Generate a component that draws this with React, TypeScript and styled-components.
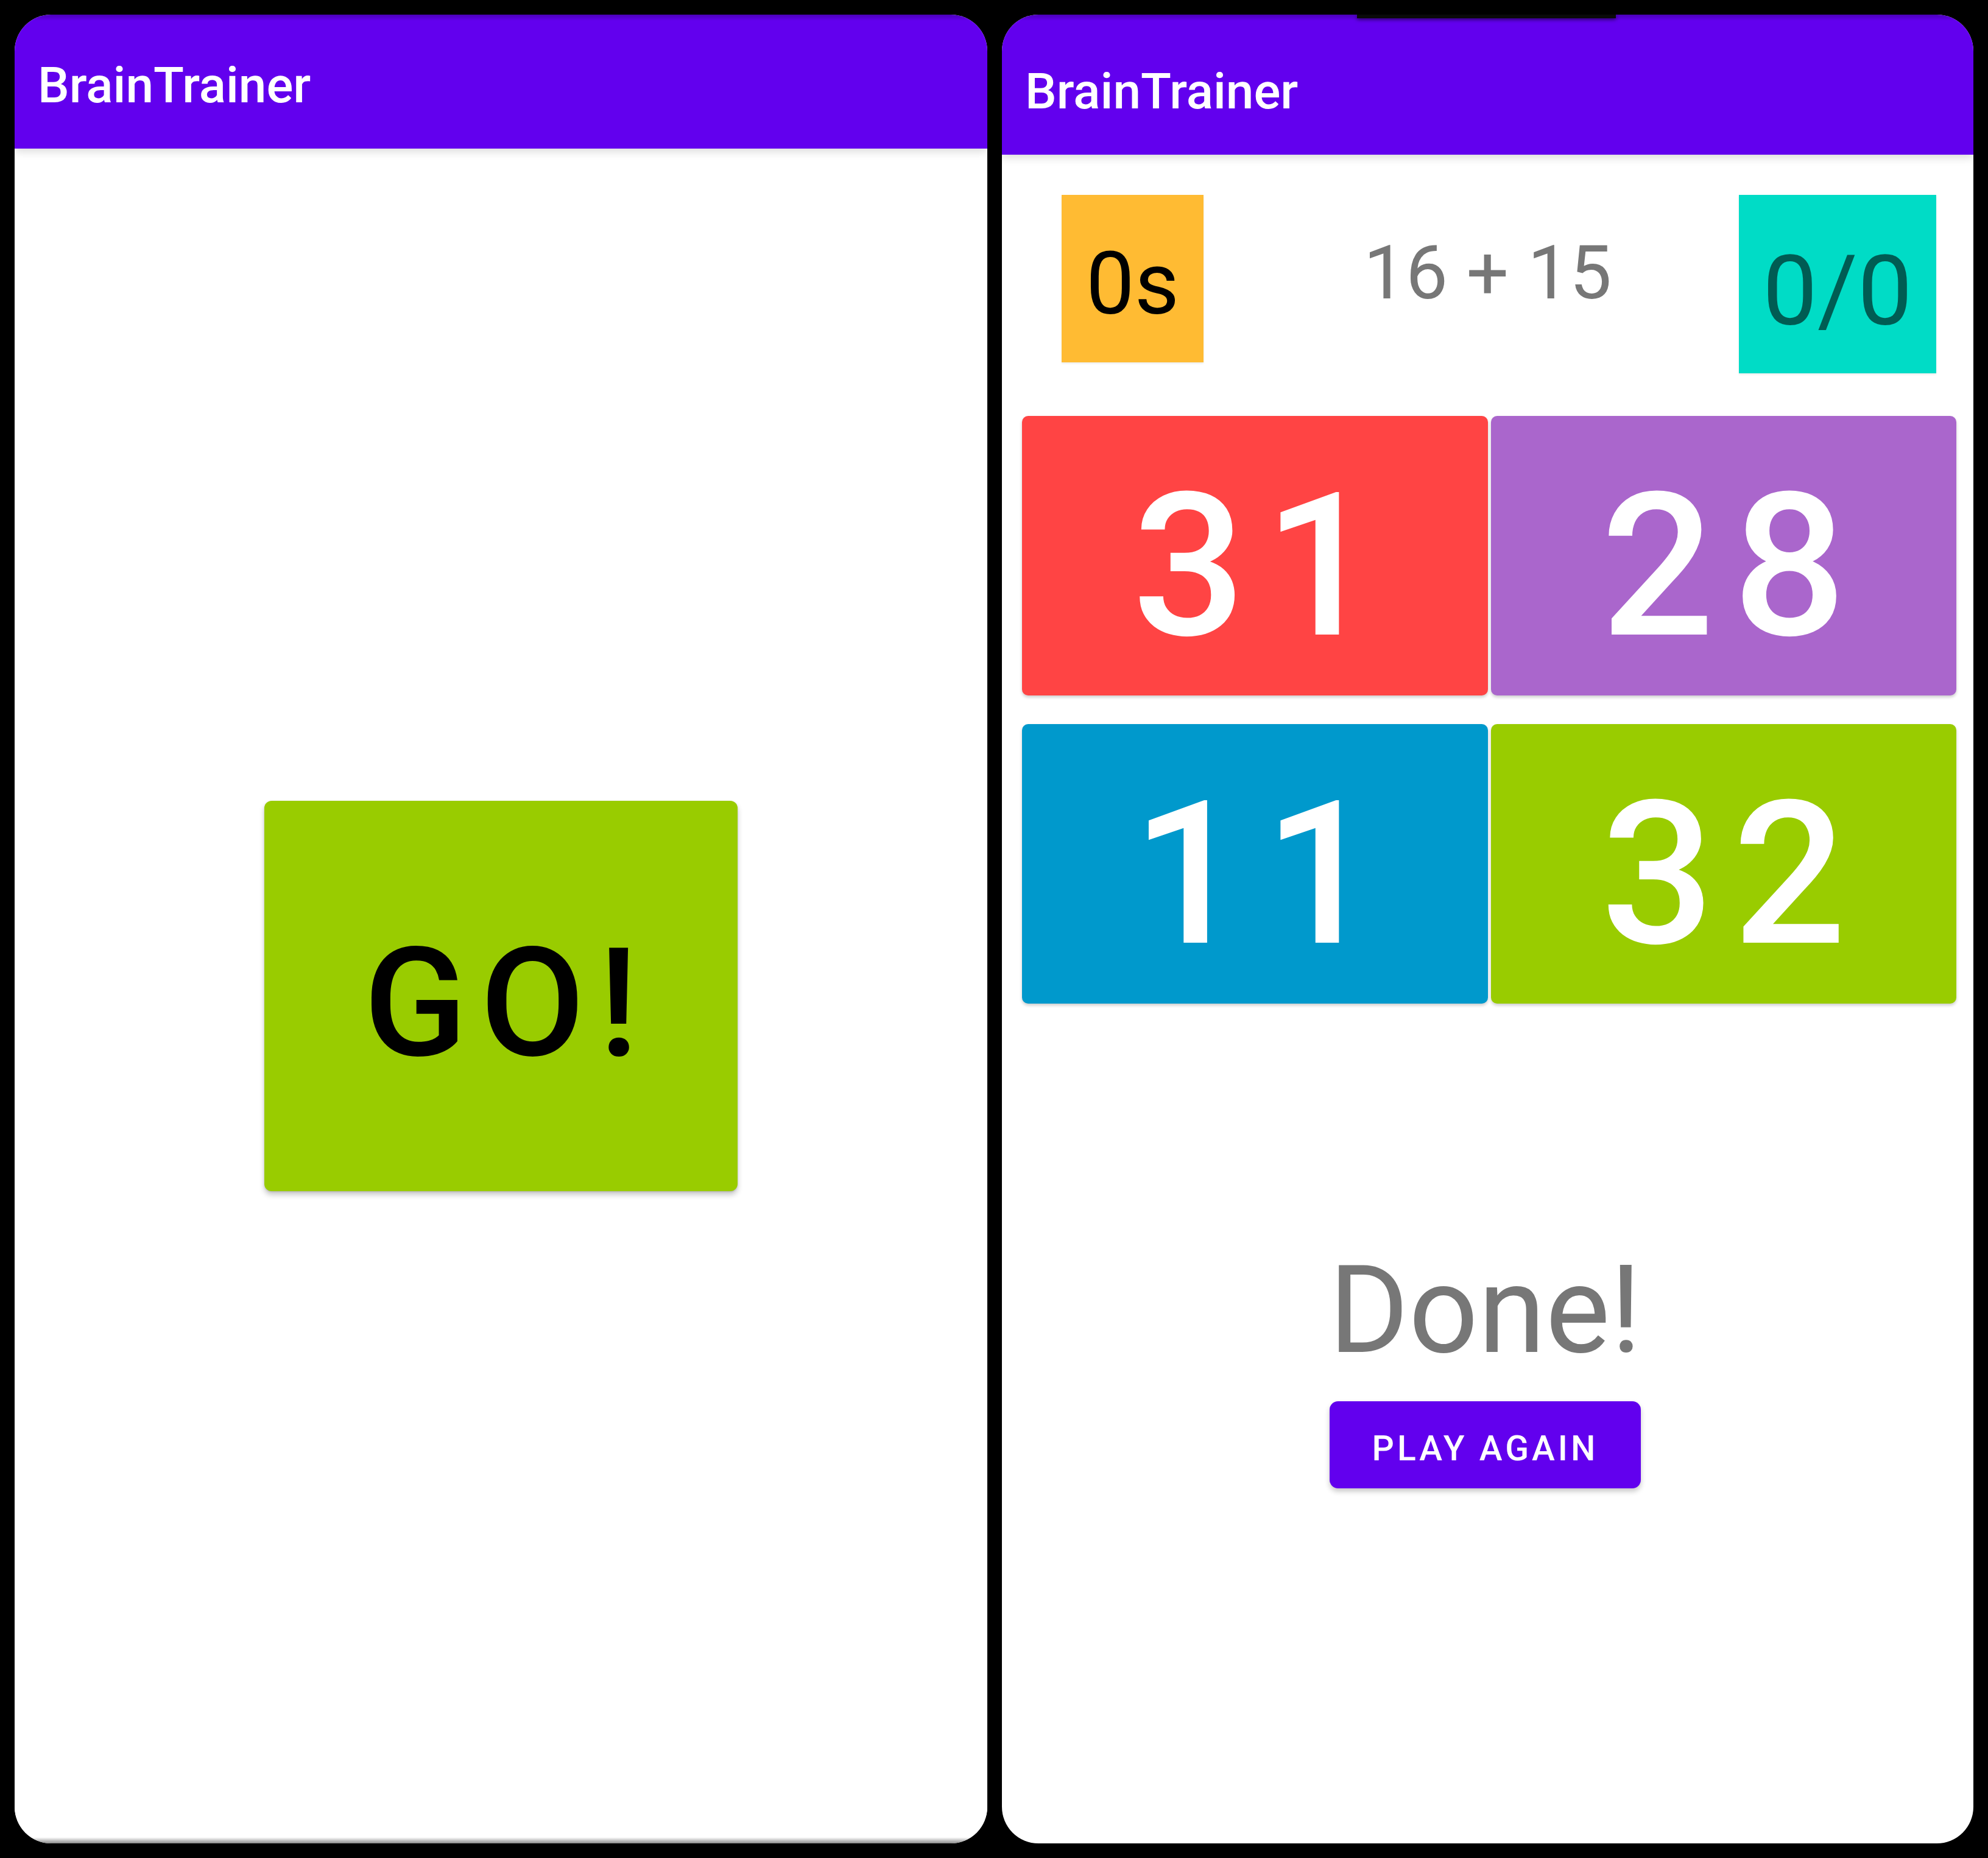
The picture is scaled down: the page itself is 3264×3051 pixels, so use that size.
import React from "react";
import styled, { createGlobalStyle } from "styled-components";

const Global = createGlobalStyle`
  html, body {
    margin: 0;
    padding: 0;
    background: #000;
  }
  body {
    font-family: Roboto, "Liberation Sans", Arial, sans-serif;
  }
  * { box-sizing: border-box; }
`;

const Stage = styled.div`
  width: 3264px;
  height: 3051px;
  background: #000;
  padding: 24px;
  display: flex;
  gap: 24px;
`;

const Phone = styled.div<{ $width: number }>`
  position: relative;
  width: ${(p) => p.$width}px;
  height: 3003px;
  background: #fff;
  border-radius: 60px;
  overflow: hidden;
  display: flex;
  flex-direction: column;
`;

const AppBar = styled.header<{ $height: number; $offset: number }>`
  position: relative;
  z-index: 1;
  flex: none;
  height: ${(p) => p.$height}px;
  background: linear-gradient(#4a00b8 0px, #6200ee 10px, #6200ee 100%);
  display: flex;
  align-items: center;
  padding: ${(p) => p.$offset}px 0 0 38px;
  box-shadow: 0 4px 14px rgba(0, 0, 0, 0.16);
`;

const Title = styled.h1`
  margin: 0;
  font-family: Roboto, "Liberation Sans", sans-serif;
  font-weight: 500;
  font-size: 82px;
  color: #fff;
  letter-spacing: 0;
`;

const Notch = styled.div`
  position: absolute;
  z-index: 2;
  top: 0;
  left: 583px;
  width: 425px;
  height: 6px;
  background: #0a0a0a;
  box-shadow: 0 2px 6px rgba(0, 0, 0, 0.6);
`;

const StartBody = styled.main`
  flex: 1;
  display: flex;
  align-items: center;
  justify-content: center;
  background: linear-gradient(#fff calc(100% - 10px), #8a8a8a 100%);
`;

const GoButton = styled.button`
  width: 777px;
  height: 641px;
  border: none;
  border-radius: 12px;
  background: #99cc00;
  color: #000;
  font-family: Roboto, "Liberation Sans", sans-serif;
  font-weight: 500;
  font-size: 249px;
  letter-spacing: 22px;
  padding: 25px 0 0 22px;
  box-shadow: 0 6px 10px rgba(0, 0, 0, 0.22), 0 1px 3px rgba(0, 0, 0, 0.15);
  cursor: pointer;
`;

const GameBody = styled.main`
  flex: 1;
  display: flex;
  flex-direction: column;
  align-items: stretch;
`;

const StatusRow = styled.div`
  margin-top: 66px;
  display: grid;
  grid-template-columns: 1fr auto 1fr;
  align-items: start;
`;

const StatBox = styled.div<{ $bg: string; $ink: string; $w: number; $h: number; $size: number; $top: number; $side: "left" | "right"; $gap: number }>`
  justify-self: ${(p) => (p.$side === "left" ? "start" : "end")};
  ${(p) => (p.$side === "left" ? `margin-left: ${p.$gap}px;` : `margin-right: ${p.$gap}px;`)}
  width: ${(p) => p.$w}px;
  height: ${(p) => p.$h}px;
  padding-top: ${(p) => p.$top}px;
  background: ${(p) => p.$bg};
  color: ${(p) => p.$ink};
  font-size: ${(p) => p.$size}px;
  font-weight: 400;
  text-align: center;
  white-space: nowrap;
  box-shadow: 0 2px 3px rgba(0, 0, 0, 0.08);
`;

const Question = styled.div`
  margin-top: 56px;
  font-size: 123px;
  font-weight: 400;
  color: #777;
  white-space: nowrap;
  text-align: center;
`;

const AnswerGrid = styled.div`
  margin-top: 70px;
  padding: 0 28px 0 33px;
  display: grid;
  grid-template-columns: 1fr 1fr;
  column-gap: 5px;
  row-gap: 47px;
`;

const AnswerTile = styled.button<{ $bg: string }>`
  height: 459px;
  border: none;
  border-radius: 10px;
  background: ${(p) => p.$bg};
  color: #fff;
  font-family: Roboto, "Liberation Sans", sans-serif;
  font-weight: 500;
  font-size: 328px;
  letter-spacing: 30px;
  padding: 35px 0 0 30px;
  display: flex;
  align-items: center;
  justify-content: center;
  box-shadow: 0 3px 5px rgba(0, 0, 0, 0.2);
  cursor: pointer;
`;

const Result = styled.div`
  margin-top: 386px;
  display: flex;
  flex-direction: column;
  align-items: center;
  padding-right: 8px;
`;

const DoneText = styled.div`
  font-size: 200px;
  font-weight: 400;
  color: #777;
`;

const PlayAgain = styled.button`
  margin-top: 32px;
  width: 511px;
  height: 143px;
  border: none;
  border-radius: 14px;
  background: #6200ee;
  color: #fff;
  font-family: Roboto, "Liberation Sans", sans-serif;
  font-weight: 500;
  font-size: 57px;
  letter-spacing: 5px;
  padding: 12px 0 0 0;
  box-shadow: 0 5px 9px rgba(0, 0, 0, 0.22);
  cursor: pointer;
`;

const answers = [
  { value: 31, color: "#ff4444" },
  { value: 28, color: "#aa66cc" },
  { value: 11, color: "#0099cc" },
  { value: 32, color: "#99cc00" },
];

export default function App() {
  return (
    <>
      <Global />
      <Stage>
        <Phone $width={1597}>
          <AppBar $height={220} $offset={12}>
            <Title>BrainTrainer</Title>
          </AppBar>
          <StartBody>
            <GoButton>GO!</GoButton>
          </StartBody>
        </Phone>
        <Phone $width={1595}>
          <Notch />
          <AppBar $height={230} $offset={22}>
            <Title>BrainTrainer</Title>
          </AppBar>
          <GameBody>
            <StatusRow>
              <StatBox $side="left" $gap={98} $bg="#ffbb33" $ink="#000" $w={233} $h={275} $size={142} $top={63}>
                0s
              </StatBox>
              <Question>16 + 15</Question>
              <StatBox $side="right" $gap={61} $bg="#00dcc6" $ink="rgba(0,0,0,0.58)" $w={324} $h={293} $size={160} $top={64}>
                0/0
              </StatBox>
            </StatusRow>
            <AnswerGrid>
              {answers.map((a) => (
                <AnswerTile key={a.value} $bg={a.color}>
                  {a.value}
                </AnswerTile>
              ))}
            </AnswerGrid>
            <Result>
              <DoneText>Done!</DoneText>
              <PlayAgain>PLAY AGAIN</PlayAgain>
            </Result>
          </GameBody>
        </Phone>
      </Stage>
    </>
  );
}
